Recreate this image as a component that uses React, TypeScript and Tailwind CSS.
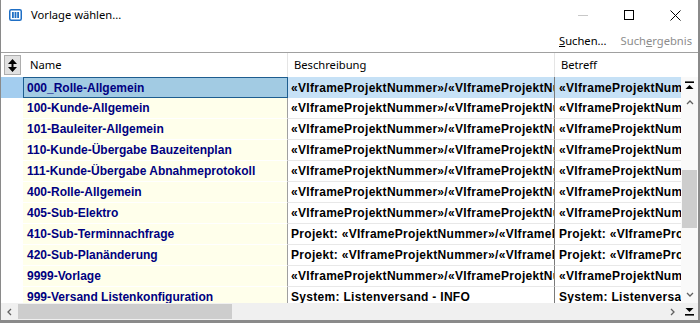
import React from "react";

const rows = [
  { name: "000_Rolle-Allgemein", desc: "«VIframeProjektNummer»/«VIframeProjektNummer»", betreff: "«VIframeProjektNummer»" },
  { name: "100-Kunde-Allgemein", desc: "«VIframeProjektNummer»/«VIframeProjektNummer»", betreff: "«VIframeProjektNummer»" },
  { name: "101-Bauleiter-Allgemein", desc: "«VIframeProjektNummer»/«VIframeProjektNummer»", betreff: "«VIframeProjektNummer»" },
  { name: "110-Kunde-Übergabe Bauzeitenplan", desc: "«VIframeProjektNummer»/«VIframeProjektNummer»", betreff: "«VIframeProjektNummer»" },
  { name: "111-Kunde-Übergabe Abnahmeprotokoll", desc: "«VIframeProjektNummer»/«VIframeProjektNummer»", betreff: "«VIframeProjektNummer»" },
  { name: "400-Rolle-Allgemein", desc: "«VIframeProjektNummer»/«VIframeProjektNummer»", betreff: "«VIframeProjektNummer»" },
  { name: "405-Sub-Elektro", desc: "«VIframeProjektNummer»/«VIframeProjektNummer»", betreff: "«VIframeProjektNummer»" },
  { name: "410-Sub-Terminnachfrage", desc: "Projekt: «VIframeProjektNummer»/«VIframeProjekt»", betreff: "Projekt: «VIframeProjektNummer»" },
  { name: "420-Sub-Planänderung", desc: "Projekt: «VIframeProjektNummer»/«VIframeProjekt»", betreff: "Projekt: «VIframeProjektNummer»" },
  { name: "9999-Vorlage", desc: "«VIframeProjektNummer»/«VIframeProjektNummer»", betreff: "«VIframeProjektNummer»" },
  { name: "999-Versand Listenkonfiguration", desc: "System: Listenversand - INFO", betreff: "System: Listenversand - INFO" },
];

const ui = { fontFamily: '"Noto Sans", "Open Sans", sans-serif' };
const cell = { fontFamily: '"Liberation Sans", Arial, sans-serif' };

function Chevron({ dir }: { dir: "up" | "down" | "left" | "right" }) {
  const d = {
    up: "M1 5 L4 2 L7 5",
    down: "M1 2 L4 5 L7 2",
    left: "M5 1 L2 4 L5 7",
    right: "M2 1 L5 4 L2 7",
  }[dir];
  return (
    <svg width="8" height="8" viewBox="0 0 8 8" fill="none" stroke="#606060" strokeWidth="1.3">
      <path d={d} />
    </svg>
  );
}

function BarArrow({ down }: { down?: boolean }) {
  return (
    <svg width="9" height="9" viewBox="0 0 9 9" fill="#000">
      {down ? (
        <>
          <path d="M0.5 1 H8.5 L4.5 5 Z" />
          <rect x="0" y="7" width="9" height="1.6" />
        </>
      ) : (
        <>
          <rect x="0" y="0.4" width="9" height="1.6" />
          <path d="M0.5 8 H8.5 L4.5 4 Z" />
        </>
      )}
    </svg>
  );
}

export default function App() {
  return (
    <div className="w-[700px] h-[323px] bg-white flex flex-col overflow-hidden border-l border-r-[2px] border-b-[3px] border-[#8a8a8a]" style={ui}>
      {/* title bar */}
      <div className="h-[30px] flex items-center shrink-0">
        <svg className="ml-[8px]" width="13" height="12" viewBox="0 0 13 12">
          <rect x="0.75" y="0.75" width="11.5" height="10.5" rx="1.5" fill="#fff" stroke="#1f6fc5" strokeWidth="1.5" />
          <rect x="3" y="3" width="1.8" height="6" fill="#1f6fc5" />
          <rect x="5.6" y="3" width="1.8" height="6" fill="#1f6fc5" />
          <rect x="8.2" y="3" width="1.8" height="6" fill="#1f6fc5" />
        </svg>
        <span className="ml-[9px] text-[11.2px] text-black">Vorlage wählen...</span>
        <div className="ml-auto flex items-center h-full">
          <div className="w-[46px] h-full flex items-center justify-center">
            <div className="w-[10px] h-px bg-[#c8c8c8]" />
          </div>
          <div className="w-[46px] h-full flex items-center justify-center">
            <div className="w-[10px] h-[10px] border border-black" />
          </div>
          <div className="w-[46px] h-full flex items-center justify-center">
            <svg width="11" height="11" viewBox="0 0 11 11" stroke="#000" strokeWidth="1">
              <path d="M0.5 0.5 L10.5 10.5 M10.5 0.5 L0.5 10.5" />
            </svg>
          </div>
        </div>
      </div>

      {/* toolbar */}
      <div className="h-[22px] flex items-center justify-end gap-[14px] pr-[6px] text-[11.2px] shrink-0">
        <span className="text-black"><span className="underline">S</span>uchen...</span>
        <span className="text-[#8c8c8c]">Such<span className="underline">e</span>rgebnis</span>
      </div>

      {/* grid */}
      <div className="flex-1 min-h-0 flex flex-col border-t border-[#a0a0a0]">
        {/* header */}
        <div className="h-[24px] flex shrink-0 text-[11.2px] text-black bg-white">
          <div className="w-[22px] shrink-0 flex items-center justify-center">
            <div className="w-[17px] h-[20px] bg-[#e1e1e1] border border-[#adadad] flex items-center justify-center">
              <svg width="9" height="13" viewBox="0 0 9 13" fill="#000">
                <path d="M4.5 0 L9 5 H0 Z M0 8 H9 L4.5 13 Z" />
                <rect x="3.5" y="4" width="2" height="5" />
              </svg>
            </div>
          </div>
          <div className="w-[265px] shrink-0 flex items-center pl-[7px] border-r border-[#e5e5e5]">Name</div>
          <div className="w-[267px] shrink-0 flex items-center pl-[6px] border-r border-[#e5e5e5]">Beschreibung</div>
          <div className="flex-1 flex items-center pl-[6px]">Betreff</div>
        </div>

        {/* body */}
        <div className="flex-1 min-h-0 flex">
          <div className="flex-1 min-w-0 overflow-hidden" style={cell}>
            {rows.map((r, i) => {
              const sel = i === 0;
              return (
                <div key={r.name} className="h-[21px] flex text-[12px] font-bold whitespace-nowrap">
                  <div className={`w-[22px] shrink-0 ${sel ? "bg-[#a3cdef]" : "bg-white"}`} />
                  <div
                    className={`w-[265px] shrink-0 flex items-center pl-[4px] overflow-hidden text-[#000080] border-r border-[#a0a0a0] ${
                      sel ? "bg-[#a2cbe3] outline outline-1 -outline-offset-1 outline-[#1d5d8f]" : "bg-[#ffffeb] border-b border-b-white"
                    }`}
                  >
                    {r.name}
                  </div>
                  <div className={`w-[267px] shrink-0 flex items-center pl-[3px] overflow-hidden text-black tracking-[0.3px] border-r border-[#7a7a7a] ${sel ? "bg-[#c6e1f6]" : "bg-white border-b border-b-[#e8e8e8]"}`}>
                    {r.desc}
                  </div>
                  <div className={`flex-1 min-w-0 flex items-center pl-[4px] overflow-hidden text-black tracking-[0.3px] ${sel ? "bg-[#c6e1f6]" : "bg-white border-b border-[#e8e8e8]"}`}>
                    {r.betreff}
                  </div>
                </div>
              );
            })}
          </div>
          {/* vertical scrollbar */}
          <div className="w-[17px] shrink-0 bg-[#f9f9f9] flex flex-col items-center">
            <div className="h-[17px] flex items-center justify-center"><BarArrow /></div>
            <div className="h-[17px] flex items-center justify-center"><Chevron dir="up" /></div>
            <div className="h-[59px]" />
            <div className="w-[15px] h-[58px] bg-[#cdcdcd]" />
            <div className="flex-1" />
            <div className="h-[17px] flex items-center justify-center"><Chevron dir="down" /></div>
          </div>
        </div>

        {/* horizontal scrollbar */}
        <div className="h-[17px] shrink-0 flex items-center bg-[#f0f0f0]">
          <div className="w-[17px] flex items-center justify-center"><Chevron dir="left" /></div>
          <div className="w-[214px] h-[15px] bg-[#cdcdcd]" />
          <div className="flex-1" />
          <div className="w-[17px] flex items-center justify-center"><Chevron dir="right" /></div>
          <div className="w-[17px] flex items-center justify-center"><BarArrow down /></div>
        </div>
      </div>
    </div>
  );
}
